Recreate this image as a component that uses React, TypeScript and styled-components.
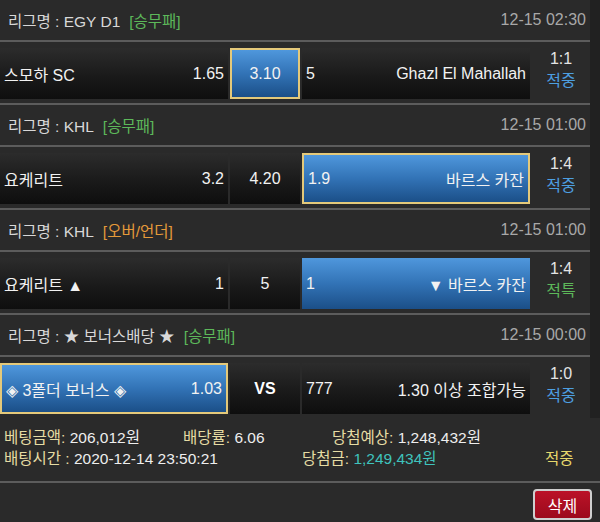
import React from 'react';
import styled, { createGlobalStyle } from 'styled-components';

const GlobalStyle = createGlobalStyle`
  body {
    margin: 0;
    background: #2a2a2a;
    font-family: "Liberation Sans", "Noto Sans CJK KR", sans-serif;
    color: #e8e8e8;
  }
`;

const Page = styled.div`
  width: 600px;
  background: #2a2a2a;
`;

const List = styled.div`
  background: #212121;
  padding-right: 10px;
`;

const Block = styled.section`
  background: #2a2a2a;
`;

const Header = styled.div`
  height: 40px;
  display: flex;
  align-items: center;
  justify-content: space-between;
  padding: 0 4px 0 8px;
  border-bottom: 2px solid #5c5c5c;
  font-size: 15.5px;
  color: #d8d8d8;
`;

const League = styled.span`
  display: flex;
  align-items: center;
`;

const BetType = styled.span<{ $color: string }>`
  margin-left: 9px;
  color: ${({ $color }) => $color};
`;

const DateText = styled.span`
  color: #a8a8a8;
  font-size: 16px;
`;

const Row = styled.div<{ $last?: boolean }>`
  display: grid;
  grid-template-columns: 228px 70px 228px 1fr;
  column-gap: 2px;
  padding: 6px 0 4px;
  border-bottom: ${({ $last }) => ($last ? 'none' : '2px solid #5c5c5c')};
`;

const Cell = styled.div<{ $blue?: boolean; $gold?: boolean; $center?: boolean }>`
  box-sizing: border-box;
  height: 51px;
  display: flex;
  align-items: center;
  justify-content: ${({ $center }) => ($center ? 'center' : 'space-between')};
  padding: 0 4px;
  font-size: 16px;
  color: #f2f2f2;
  background: ${({ $blue }) =>
    $blue
      ? 'linear-gradient(to bottom, #4f97dc 0%, #3273b6 50%, #1b4f88 100%)'
      : 'linear-gradient(to bottom, #2c2c2c 0%, #1a1a1a 55%, #0e0e0e 100%)'};
  border: ${({ $gold }) => ($gold ? '2px solid #e4c97a' : 'none')};
`;

const Vs = styled.span`
  font-weight: bold;
  font-size: 16px;
  color: #ffffff;
`;

const Score = styled.div`
  display: flex;
  flex-direction: column;
  align-items: center;
  justify-content: center;
  line-height: 22px;
  font-size: 16px;
  margin-top: -7px;
`;

const ScoreValue = styled.span`
  color: #e4e4e4;
`;

const Status = styled.span<{ $color: string }>`
  color: ${({ $color }) => $color};
`;

const Info = styled.div`
  padding: 9px 4px 12px;
  border-bottom: 2px solid #5c5c5c;
  font-size: 15.5px;
  line-height: 21px;
`;

const InfoLine = styled.div`
  display: flex;
`;

const Field = styled.span<{ $width?: number }>`
  flex: ${({ $width }) => ($width ? `0 0 ${$width}px` : '1')};
  white-space: nowrap;
`;

const Label = styled.span`
  color: #e6dca4;
`;

const Value = styled.span<{ $color?: string }>`
  color: ${({ $color }) => $color || '#eeeeee'};
`;

const Footer = styled.div`
  display: flex;
  justify-content: flex-end;
  padding: 6px 8px 4px;
`;

const DeleteButton = styled.button`
  width: 59px;
  height: 31px;
  border: 2px solid #cfcfcf;
  border-radius: 4px;
  background: linear-gradient(to bottom, #bb1228 0%, #9c0a1c 100%);
  color: #ffffff;
  font-family: inherit;
  font-size: 16px;
  cursor: pointer;
`;

const GREEN = '#5db85a';
const ORANGE = '#e59a3a';
const HIT = '#4d9fe0';

type Pick = 'home' | 'draw' | 'away';

interface Game {
  league: React.ReactNode;
  type: string;
  typeColor: string;
  date: string;
  home: React.ReactNode;
  homeOdds: string;
  draw: React.ReactNode;
  away: React.ReactNode;
  awayOdds: string;
  pick: Pick;
  gold: boolean;
  score: string;
  status: string;
  statusColor: string;
}

const games: Game[] = [
  {
    league: 'EGY D1',
    type: '[승무패]',
    typeColor: GREEN,
    date: '12-15 02:30',
    home: '스모하 SC',
    homeOdds: '1.65',
    draw: '3.10',
    away: 'Ghazl El Mahallah',
    awayOdds: '5',
    pick: 'draw',
    gold: true,
    score: '1:1',
    status: '적중',
    statusColor: HIT,
  },
  {
    league: 'KHL',
    type: '[승무패]',
    typeColor: GREEN,
    date: '12-15 01:00',
    home: '요케리트',
    homeOdds: '3.2',
    draw: '4.20',
    away: '바르스 카잔',
    awayOdds: '1.9',
    pick: 'away',
    gold: true,
    score: '1:4',
    status: '적중',
    statusColor: HIT,
  },
  {
    league: 'KHL',
    type: '[오버/언더]',
    typeColor: ORANGE,
    date: '12-15 01:00',
    home: '요케리트 ▲',
    homeOdds: '1',
    draw: '5',
    away: '▼ 바르스 카잔',
    awayOdds: '1',
    pick: 'away',
    gold: false,
    score: '1:4',
    status: '적특',
    statusColor: GREEN,
  },
  {
    league: '★ 보너스배당 ★',
    type: '[승무패]',
    typeColor: GREEN,
    date: '12-15 00:00',
    home: '◈ 3폴더 보너스 ◈',
    homeOdds: '1.03',
    draw: <Vs>VS</Vs>,
    away: '1.30 이상 조합가능',
    awayOdds: '777',
    pick: 'home',
    gold: true,
    score: '1:0',
    status: '적중',
    statusColor: HIT,
  },
];

export default function App() {
  return (
    <Page>
      <GlobalStyle />
      <List>
        {games.map((g, i) => (
          <Block key={i}>
            <Header>
              <League>
                리그명 : {g.league}
                <BetType $color={g.typeColor}>{g.type}</BetType>
              </League>
              <DateText>{g.date}</DateText>
            </Header>
            <Row $last={i === games.length - 1}>
              <Cell $blue={g.pick === 'home'} $gold={g.pick === 'home' && g.gold}>
                <span>{g.home}</span>
                <span>{g.homeOdds}</span>
              </Cell>
              <Cell $center $blue={g.pick === 'draw'} $gold={g.pick === 'draw' && g.gold}>
                {g.draw}
              </Cell>
              <Cell $blue={g.pick === 'away'} $gold={g.pick === 'away' && g.gold}>
                <span>{g.awayOdds}</span>
                <span>{g.away}</span>
              </Cell>
              <Score>
                <ScoreValue>{g.score}</ScoreValue>
                <Status $color={g.statusColor}>{g.status}</Status>
              </Score>
            </Row>
          </Block>
        ))}
      </List>
      <Info>
        <InfoLine>
          <Field $width={179}>
            <Label>베팅금액:</Label> <Value>206,012원</Value>
          </Field>
          <Field $width={149}>
            <Label>배당률:</Label> <Value>6.06</Value>
          </Field>
          <Field>
            <Label>당첨예상:</Label> <Value>1,248,432원</Value>
          </Field>
        </InfoLine>
        <InfoLine>
          <Field $width={298}>
            <Label>배팅시간 :</Label> <Value>2020-12-14 23:50:21</Value>
          </Field>
          <Field $width={243}>
            <Label>당첨금:</Label> <Value $color="#3fc3bd">1,249,434원</Value>
          </Field>
          <Field>
            <Value $color="#e6d86c">적중</Value>
          </Field>
        </InfoLine>
      </Info>
      <Footer>
        <DeleteButton>삭제</DeleteButton>
      </Footer>
    </Page>
  );
}
